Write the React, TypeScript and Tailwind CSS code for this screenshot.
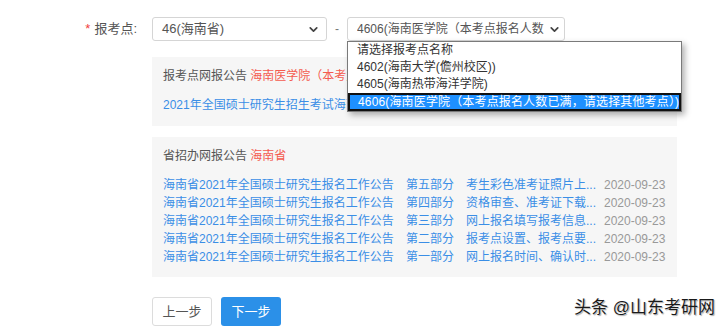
import { ChevronDown } from "lucide-react";

const rows = [
  { part: "第五部分", desc: "考生彩色准考证照片上..." },
  { part: "第四部分", desc: "资格审查、准考证下载..." },
  { part: "第三部分", desc: "网上报名填写报考信息..." },
  { part: "第二部分", desc: "报考点设置、报考点要..." },
  { part: "第一部分", desc: "网上报名时间、确认时..." },
];

const options = [
  "请选择报考点名称",
  "4602(海南大学(儋州校区))",
  "4605(海南热带海洋学院)",
];

export default function App() {
  return (
    <div className="relative w-[723px] h-[327px] overflow-hidden bg-white font-['Liberation_Sans','Noto_Sans_CJK_SC',sans-serif] text-[12px] text-[#555]">
      <div className="pt-[17px]">
        <div className="flex items-center">
          <div className="w-[137px] flex justify-end items-center text-[13px] leading-[24px]">
            <span className="text-[#f1403c] mr-[4px]">*</span>
            <span>报考点:</span>
          </div>
          <div className="ml-[15px] w-[175px] h-[24px] border border-[#d5d5d5] rounded-[3px] flex items-center justify-between pl-[9px] pr-[6px] text-[13px]">
            <span>46(海南省)</span>
            <ChevronDown size={13} strokeWidth={3.2} className="text-[#444]" />
          </div>
          <span className="mx-[8px] text-[#777]">-</span>
          <div className="relative">
            <div className="w-[218px] h-[24px] border border-[#d5d5d5] rounded-[3px] flex items-center pl-[9px] pr-[3px]">
              <span className="w-[192px] overflow-hidden whitespace-nowrap">
                4606(海南医学院（本考点报名人数
              </span>
              <ChevronDown size={13} strokeWidth={3.2} className="text-[#444] ml-[2px] shrink-0" />
            </div>
            <div className="absolute left-0 top-[24px] z-10 w-[335px] bg-white border border-[#7a7a7a] shadow-[3px_3px_6px_rgba(0,0,0,0.3)]">
              {options.map((o) => (
                <div key={o} className="h-[17px] leading-[17px] pl-[9px] text-[#333] whitespace-nowrap">
                  {o}
                </div>
              ))}
              <div className="h-[18px] leading-[14px] pl-[8px] bg-[#1e90ff] border-2 border-[#111] text-white whitespace-nowrap tracking-[0.15px]">
                4606(海南医学院（本考点报名人数已满，请选择其他考点）)
              </div>
            </div>
          </div>
        </div>

        <div className="ml-[152px] w-[525px] mt-[16px] bg-[#f6f6f6] pl-[11px] pt-[10px] pb-[12px]">
          <div className="leading-[18px] whitespace-nowrap">
            报考点网报公告 <span className="text-[#f45b4f]">海南医学院（本考点报名人数已满）</span>
          </div>
          <div className="mt-[11px] leading-[18px] text-[#3a8ee6] whitespace-nowrap">
            2021年全国硕士研究生招生考试海南医学院报考点公告
          </div>
        </div>

        <div className="ml-[152px] w-[525px] mt-[11px] bg-[#f6f6f6] pl-[11px] pt-[10px] pb-[11px]">
          <div className="leading-[18px]">
            省招办网报公告 <span className="text-[#f45b4f]">海南省</span>
          </div>
          <div className="mt-[11px] flex flex-col">
            {rows.map((r) => (
              <div key={r.part} className="flex h-[18px] leading-[18px] whitespace-nowrap">
                <span className="w-[243px] text-[#3a8ee6]">海南省2021年全国硕士研究生报名工作公告</span>
                <span className="w-[60px] text-[#3a8ee6]">{r.part}</span>
                <span className="w-[138px] text-[#3a8ee6]">{r.desc}</span>
                <span className="text-[#999]">2020-09-23</span>
              </div>
            ))}
          </div>
        </div>

        <div className="ml-[152px] mt-[20px] flex gap-[9px] text-[13px]">
          <button className="w-[60px] h-[29px] border border-[#dcdcdc] rounded-[3px] bg-white text-[#555]">
            上一步
          </button>
          <button className="w-[60px] h-[29px] rounded-[3px] bg-[#2b90e8] text-white">
            下一步
          </button>
        </div>
      </div>

      <div className="absolute right-[8px] bottom-[9px] text-[17px] leading-[20px] text-[#1a1a1a] [text-shadow:0_0_2px_#fff,1px_1px_1px_#999]">
        头条 @山东考研网
      </div>
    </div>
  );
}
